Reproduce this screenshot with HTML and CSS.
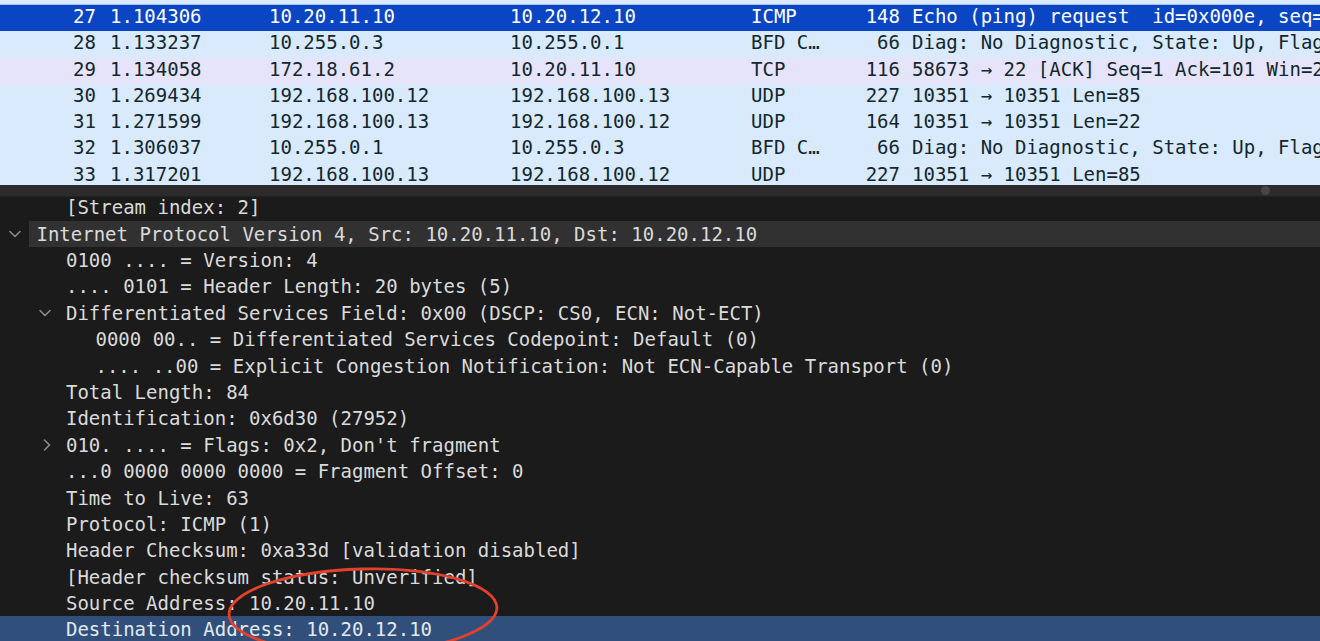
FILE: index.html
```html
<!DOCTYPE html>
<html lang="en">
<head>
<meta charset="utf-8">
<title>Wireshark packet view</title>
<link rel="stylesheet" href="styles.css">
</head>
<body>
<div class="app">
  <div class="list">
    <div class="prev"></div>
    <div class="row sel"><span class="c-no">27</span><span class="c-time">1.104306</span><span class="c-src">10.20.11.10</span><span class="c-dst">10.20.12.10</span><span class="c-proto">ICMP</span><span class="c-len">148</span><span class="c-info">Echo (ping) request  id=0x000e, seq=1/256</span></div>
    <div class="row udp"><span class="c-no">28</span><span class="c-time">1.133237</span><span class="c-src">10.255.0.3</span><span class="c-dst">10.255.0.1</span><span class="c-proto">BFD C…</span><span class="c-len">66</span><span class="c-info">Diag: No Diagnostic, State: Up, Flags: 0x00</span></div>
    <div class="row tcp"><span class="c-no">29</span><span class="c-time">1.134058</span><span class="c-src">172.18.61.2</span><span class="c-dst">10.20.11.10</span><span class="c-proto">TCP</span><span class="c-len">116</span><span class="c-info">58673 → 22 [ACK] Seq=1 Ack=101 Win=2048</span></div>
    <div class="row udp"><span class="c-no">30</span><span class="c-time">1.269434</span><span class="c-src">192.168.100.12</span><span class="c-dst">192.168.100.13</span><span class="c-proto">UDP</span><span class="c-len">227</span><span class="c-info">10351 → 10351 Len=85</span></div>
    <div class="row udp"><span class="c-no">31</span><span class="c-time">1.271599</span><span class="c-src">192.168.100.13</span><span class="c-dst">192.168.100.12</span><span class="c-proto">UDP</span><span class="c-len">164</span><span class="c-info">10351 → 10351 Len=22</span></div>
    <div class="row udp"><span class="c-no">32</span><span class="c-time">1.306037</span><span class="c-src">10.255.0.1</span><span class="c-dst">10.255.0.3</span><span class="c-proto">BFD C…</span><span class="c-len">66</span><span class="c-info">Diag: No Diagnostic, State: Up, Flags: 0x00</span></div>
    <div class="row udp"><span class="c-no">33</span><span class="c-time">1.317201</span><span class="c-src">192.168.100.13</span><span class="c-dst">192.168.100.12</span><span class="c-proto">UDP</span><span class="c-len">227</span><span class="c-info">10351 → 10351 Len=85</span></div>
  </div>

  <div class="splitter"><span class="handle"></span></div>

  <div class="details">
    <div class="tree">
      <div class="node l1"><span class="tog"></span><span class="lbl">[Stream index: 2]</span></div>
      <div class="node l0 hl"><span class="tog"><svg class="chev-down" viewBox="0 0 12 8" width="12" height="8"><path d="M1 1.5 L6 6.5 L11 1.5"/></svg></span><span class="lbl">Internet Protocol Version 4, Src: 10.20.11.10, Dst: 10.20.12.10</span></div>
      <div class="node l1"><span class="tog"></span><span class="lbl">0100 .... = Version: 4</span></div>
      <div class="node l1"><span class="tog"></span><span class="lbl">.... 0101 = Header Length: 20 bytes (5)</span></div>
      <div class="node l1"><span class="tog"><svg class="chev-down" viewBox="0 0 12 8" width="12" height="8"><path d="M1 1.5 L6 6.5 L11 1.5"/></svg></span><span class="lbl">Differentiated Services Field: 0x00 (DSCP: CS0, ECN: Not-ECT)</span></div>
      <div class="node l2"><span class="tog"></span><span class="lbl">0000 00.. = Differentiated Services Codepoint: Default (0)</span></div>
      <div class="node l2"><span class="tog"></span><span class="lbl">.... ..00 = Explicit Congestion Notification: Not ECN-Capable Transport (0)</span></div>
      <div class="node l1"><span class="tog"></span><span class="lbl">Total Length: 84</span></div>
      <div class="node l1"><span class="tog"></span><span class="lbl">Identification: 0x6d30 (27952)</span></div>
      <div class="node l1"><span class="tog"><svg class="chev-right" viewBox="0 0 12 12" width="12" height="12"><path d="M5.5 1 L10.5 6 L5.5 11"/></svg></span><span class="lbl">010. .... = Flags: 0x2, Don't fragment</span></div>
      <div class="node l1"><span class="tog"></span><span class="lbl">...0 0000 0000 0000 = Fragment Offset: 0</span></div>
      <div class="node l1"><span class="tog"></span><span class="lbl">Time to Live: 63</span></div>
      <div class="node l1"><span class="tog"></span><span class="lbl">Protocol: ICMP (1)</span></div>
      <div class="node l1"><span class="tog"></span><span class="lbl">Header Checksum: 0xa33d [validation disabled]</span></div>
      <div class="node l1"><span class="tog"></span><span class="lbl">[Header checksum status: Unverified]</span></div>
      <div class="node l1"><span class="tog"></span><span class="lbl">Source Address: 10.20.11.10</span></div>
      <div class="node l1 selected"><span class="tog"></span><span class="lbl">Destination Address: 10.20.12.10</span></div>
    </div>
  </div>

  <svg class="annot" viewBox="0 0 1320 641" width="1320" height="641" aria-hidden="true">
    <ellipse cx="363" cy="611" rx="134" ry="42" transform="rotate(-1.5 363 611)"/>
  </svg>
</div>
</body>
</html>
```

FILE: styles.css
```css
* { box-sizing: border-box; }

html, body {
  margin: 0;
  padding: 0;
  width: 1320px;
  height: 641px;
  overflow: hidden;
  background: #1c1c1c;
}

.app {
  position: relative;
  width: 1320px;
  height: 641px;
  display: flex;
  flex-direction: column;
  font-family: "DejaVu Sans Mono", "Liberation Mono", monospace;
  font-size: 19px;
}

/* ---------- packet list ---------- */
.list {
  height: 185px;
  flex: none;
  overflow: hidden;
  background: #daeafd;
}

.prev {
  height: 5px;
  background: #daeafd;
  border-bottom: 1px solid #a9c2ea;
}

.row {
  display: grid;
  grid-template-columns: 110px 159px 241px 241px 70px 91px 1fr;
  height: 26.25px;
  line-height: 22.25px;
  padding-bottom: 4px;
  color: #12272e;
  white-space: pre;
}

.row > span { overflow: hidden; }

.row.udp { background: #daeafd; }
.row.tcp { background: #e6e4fb; }
.row.sel { background: #0a45c4; color: #ffffff; }

.c-no { text-align: right; padding-right: 14px; }
.c-len { text-align: right; padding-right: 12px; }
.c-info { overflow: hidden; }

/* ---------- splitter ---------- */
.splitter {
  flex: none;
  height: 12px;
  background: #2b2b2b;
  border-bottom: 1px solid #222222;
  display: flex;
  justify-content: flex-end;
  align-items: center;
  padding-right: 50px;
}

.handle {
  width: 9px;
  height: 9px;
  border-radius: 50%;
  background: #464646;
}

/* ---------- details tree ---------- */
.details {
  flex: 1;
  overflow: hidden;
  background: #1b1b1b;
}

.tree {
  margin-top: -2.8px;
}

.node {
  display: flex;
  align-items: center;
  height: 26.4px;
  line-height: 26.4px;
  color: #dadada;
  white-space: pre;
}

.node.l0 { padding-left: 5px; }
.node.l1 { padding-left: 34.5px; }
.node.l2 { padding-left: 64px; }

.tog {
  flex: none;
  width: 24.3px;
  height: 26.4px;
  display: flex;
  align-items: center;
  padding-left: 4px;
}

.lbl {
  flex: 1;
  padding-left: 7.2px;
  height: 26.4px;
}

.node.hl .lbl { background: #313131; }
.node.selected { background: #30507b; color: #e4e8ee; }

.tog svg path {
  fill: none;
  stroke: #8a8a8a;
  stroke-width: 1.6;
  stroke-linecap: round;
  stroke-linejoin: round;
}

/* ---------- annotation ---------- */
.annot {
  position: absolute;
  left: 0;
  top: 0;
  pointer-events: none;
}

.annot ellipse {
  fill: none;
  stroke: #e2412c;
  stroke-width: 2.8;
}
```
